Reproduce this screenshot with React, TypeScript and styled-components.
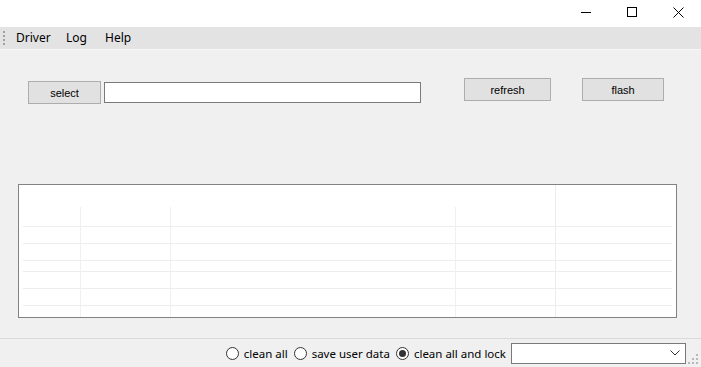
import styled, { createGlobalStyle } from 'styled-components';

const GlobalStyle = createGlobalStyle`
    html, body {
        margin: 0;
        padding: 0;
        background: #f0f0f0;
    }
    body {
        font-family: "Liberation Sans", Arial, sans-serif;
        color: #000;
    }
`;

const radioOptions = [
    { label: 'clean all', checked: false },
    { label: 'save user data', checked: false },
    { label: 'clean all and lock', checked: true },
];

const menuItems = [
    { label: 'Driver', width: 50 },
    { label: 'Log', width: 39 },
    { label: 'Help', width: 40 },
];

const App = () => {
    return (
        <Window>
            <GlobalStyle />
            <TitleBar>
                <CaptionButton>
                    <svg width='10' height='10' viewBox='0 0 10 10'>
                        <path d='M0 5.5H10' stroke='#000' strokeWidth='1' />
                    </svg>
                </CaptionButton>
                <CaptionButton>
                    <svg width='10' height='10' viewBox='0 0 10 10'>
                        <rect x='0.5' y='0.5' width='9' height='9' fill='none' stroke='#000' strokeWidth='1' />
                    </svg>
                </CaptionButton>
                <CaptionButton>
                    <svg width='11' height='11' viewBox='0 0 11 11'>
                        <path d='M0.5 0.5L10.5 10.5M10.5 0.5L0.5 10.5' stroke='#000' strokeWidth='1' />
                    </svg>
                </CaptionButton>
            </TitleBar>
            <MenuBar>
                <Gripper />
                {menuItems.map((item) => (
                    <MenuItem key={item.label} $width={item.width}>
                        {item.label}
                    </MenuItem>
                ))}
            </MenuBar>
            <Body>
                <ControlRow>
                    <LeftGroup>
                        <PushButton $width={73} $offset={3}>select</PushButton>
                        <PathInput />
                    </LeftGroup>
                    <RightGroup>
                        <PushButton $width={87} $offset={0}>refresh</PushButton>
                        <PushButton $width={82} $offset={0}>flash</PushButton>
                    </RightGroup>
                </ControlRow>
                <GridBox>
                    <svg width='657' height='132' viewBox='0 0 657 132'>
                        {[41, 58, 75, 86, 103, 120].map((y) => (
                            <line key={y} x1='4' x2='653' y1={y + 0.5} y2={y + 0.5} stroke='#ededed' />
                        ))}
                        {[61, 151, 436].map((x) => (
                            <line key={x} x1={x + 0.5} x2={x + 0.5} y1='22' y2='132' stroke='#f0f0f0' />
                        ))}
                        <line x1='536.5' x2='536.5' y1='0' y2='132' stroke='#ececec' />
                    </svg>
                </GridBox>
            </Body>
            <StatusStrip>
                {radioOptions.map((option) => (
                    <RadioItem key={option.label}>
                        <RadioCircle $checked={option.checked} />
                        <span>{option.label}</span>
                    </RadioItem>
                ))}
                <ComboBox>
                    <svg width='10' height='6' viewBox='0 0 10 6'>
                        <path d='M0.5 0.5L5 5L9.5 0.5' fill='none' stroke='#333' strokeWidth='1' />
                    </svg>
                </ComboBox>
                <SizeGrip>
                    <svg width='12' height='12' viewBox='0 0 12 12'>
                        {[
                            [9, 1],
                            [5, 5],
                            [9, 5],
                            [1, 9],
                            [5, 9],
                            [9, 9],
                        ].map(([x, y]) => (
                            <rect key={`${x}-${y}`} x={x} y={y} width='2' height='2' fill='#b8b8b8' />
                        ))}
                    </svg>
                </SizeGrip>
            </StatusStrip>
        </Window>
    );
};

const Window = styled.div`
    display: flex;
    flex-direction: column;
    width: 701px;
    height: 367px;
    background: #f0f0f0;
    overflow: hidden;
`;

const TitleBar = styled.div`
    display: flex;
    justify-content: flex-end;
    height: 27px;
    background: #fff;
`;

const CaptionButton = styled.div`
    display: flex;
    align-items: center;
    justify-content: center;
    width: 46px;
    height: 24px;
`;

const MenuBar = styled.div`
    display: flex;
    align-items: center;
    height: 22px;
    background: #e3e3e3;
    border-bottom: 1px solid #f7f7f7;
    font-family: "Noto Sans", "Liberation Sans", sans-serif;
    font-size: 12px;
`;

const Gripper = styled.div`
    width: 2px;
    height: 16px;
    margin: 0 8px 0 3px;
    background-image: radial-gradient(circle, #a0a0a0 0.8px, transparent 1px);
    background-size: 2px 4px;
`;

const MenuItem = styled.div<{ $width: number }>`
    width: ${(p) => p.$width}px;
    padding-left: 3px;
    box-sizing: border-box;
    line-height: 22px;
`;

const Body = styled.div`
    flex: 1;
    display: flex;
    flex-direction: column;
    padding: 28px 24px 0 18px;
`;

const ControlRow = styled.div`
    display: flex;
    align-items: flex-start;
    justify-content: space-between;
    padding-left: 10px;
    height: 106px;
`;

const LeftGroup = styled.div`
    display: flex;
    align-items: flex-start;
    gap: 3px;
`;

const RightGroup = styled.div`
    display: flex;
    align-items: flex-start;
    gap: 31px;
    margin-right: 13px;
`;

const PushButton = styled.button<{ $width: number; $offset: number }>`
    width: ${(p) => p.$width}px;
    height: 23px;
    margin-top: ${(p) => p.$offset}px;
    padding: 0;
    background: #e1e1e1;
    border: 1px solid #adadad;
    font-family: "Liberation Sans", Arial, sans-serif;
    font-size: 11px;
    color: #000;
`;

const PathInput = styled.div`
    width: 317px;
    height: 21px;
    margin-top: 4px;
    box-sizing: border-box;
    background: #fff;
    border: 1px solid #7a7a7a;
`;

const GridBox = styled.div`
    width: 659px;
    height: 134px;
    box-sizing: border-box;
    background: #fff;
    border: 1px solid #828282;
    svg {
        display: block;
    }
`;

const StatusStrip = styled.div`
    display: flex;
    align-items: center;
    justify-content: flex-end;
    height: 28px;
    border-top: 1px solid #dadada;
    font-family: "Noto Sans", "Liberation Sans", sans-serif;
    font-size: 11.5px;
`;

const RadioItem = styled.div`
    display: flex;
    align-items: center;
    gap: 5px;
    margin-right: 6px;
`;

const RadioCircle = styled.div<{ $checked: boolean }>`
    position: relative;
    width: 13px;
    height: 13px;
    box-sizing: border-box;
    border: 1px solid #333;
    border-radius: 50%;
    background: #fff;
    &::after {
        content: '';
        display: ${(p) => (p.$checked ? 'block' : 'none')};
        position: absolute;
        left: 2px;
        top: 2px;
        width: 7px;
        height: 7px;
        border-radius: 50%;
        background: #333;
    }
`;

const ComboBox = styled.div`
    display: flex;
    align-items: center;
    justify-content: flex-end;
    width: 175px;
    height: 21px;
    box-sizing: border-box;
    padding-right: 5px;
    margin-left: -1px;
    background: #fff;
    border: 1px solid #7a7a7a;
`;

const SizeGrip = styled.div`
    align-self: flex-end;
    width: 14px;
    height: 14px;
    margin-left: 1px;
`;

export default App;
